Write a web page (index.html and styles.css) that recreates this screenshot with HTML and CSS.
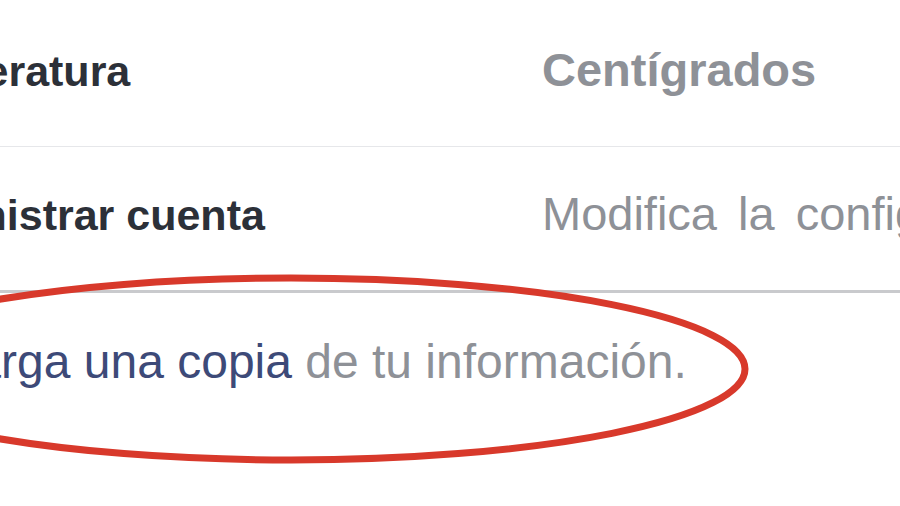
FILE: index.html
```html
<!DOCTYPE html>
<html>
<head>
	<meta charset="utf-8">
	<title>Configuración general de la cuenta</title>
	<link rel="stylesheet" href="styles.css">
</head>
<body>
	<div id="page">
		<div class="settings">
			<div class="row first">
				<div class="label">Temperatura</div>
				<div class="value bold">Centígrados</div>
			</div>
			<div class="row last">
				<div class="label">Administrar cuenta</div>
				<div class="value">Modifica la configuración de tu cuenta</div>
			</div>
		</div>
		<div class="footer">
			<a href="#">Descarga una copia</a> de tu información.
		</div>

		<!-- marca a mano alrededor del enlace -->
		<svg class="mark" width="900" height="506" viewBox="0 0 900 506">
			<ellipse cx="291" cy="369" rx="454" ry="91" fill="none" stroke="#d8392b" stroke-width="7"/>
		</svg>
	</div>
</body>
</html>
```

FILE: styles.css
```css
* {padding: 0; margin: 0;}
body {background: #fff; font-family: "Liberation Sans", Arial, sans-serif; overflow: hidden;}
#page {position: relative; width: 900px; height: 506px; overflow: hidden;}

.settings {margin-left: -127px; width: 1400px;}
.row {display: flex; align-items: baseline; white-space: nowrap;}
.row.first {padding: 40px 0 45px; border-bottom: 1px solid #e6e7ea;}
.row.last {padding: 37px 0 45px; border-bottom: 3px solid #c9cacd;}
.label {width: 669px; flex-shrink: 0; font-size: 43px; line-height: 60px; font-weight: bold; color: #2c3038;}
.value {font-size: 47px; line-height: 60px; color: #8e9197; word-spacing: 8px;}
.value.bold {font-weight: bold; word-spacing: 0;}

.footer {margin-left: -135px; padding-top: 39px; font-size: 48px; line-height: 60px; color: #8e9197; white-space: nowrap;}
.footer a {color: #3d4a78; text-decoration: none;}

.mark {position: absolute; left: 0; top: 0;}
```
